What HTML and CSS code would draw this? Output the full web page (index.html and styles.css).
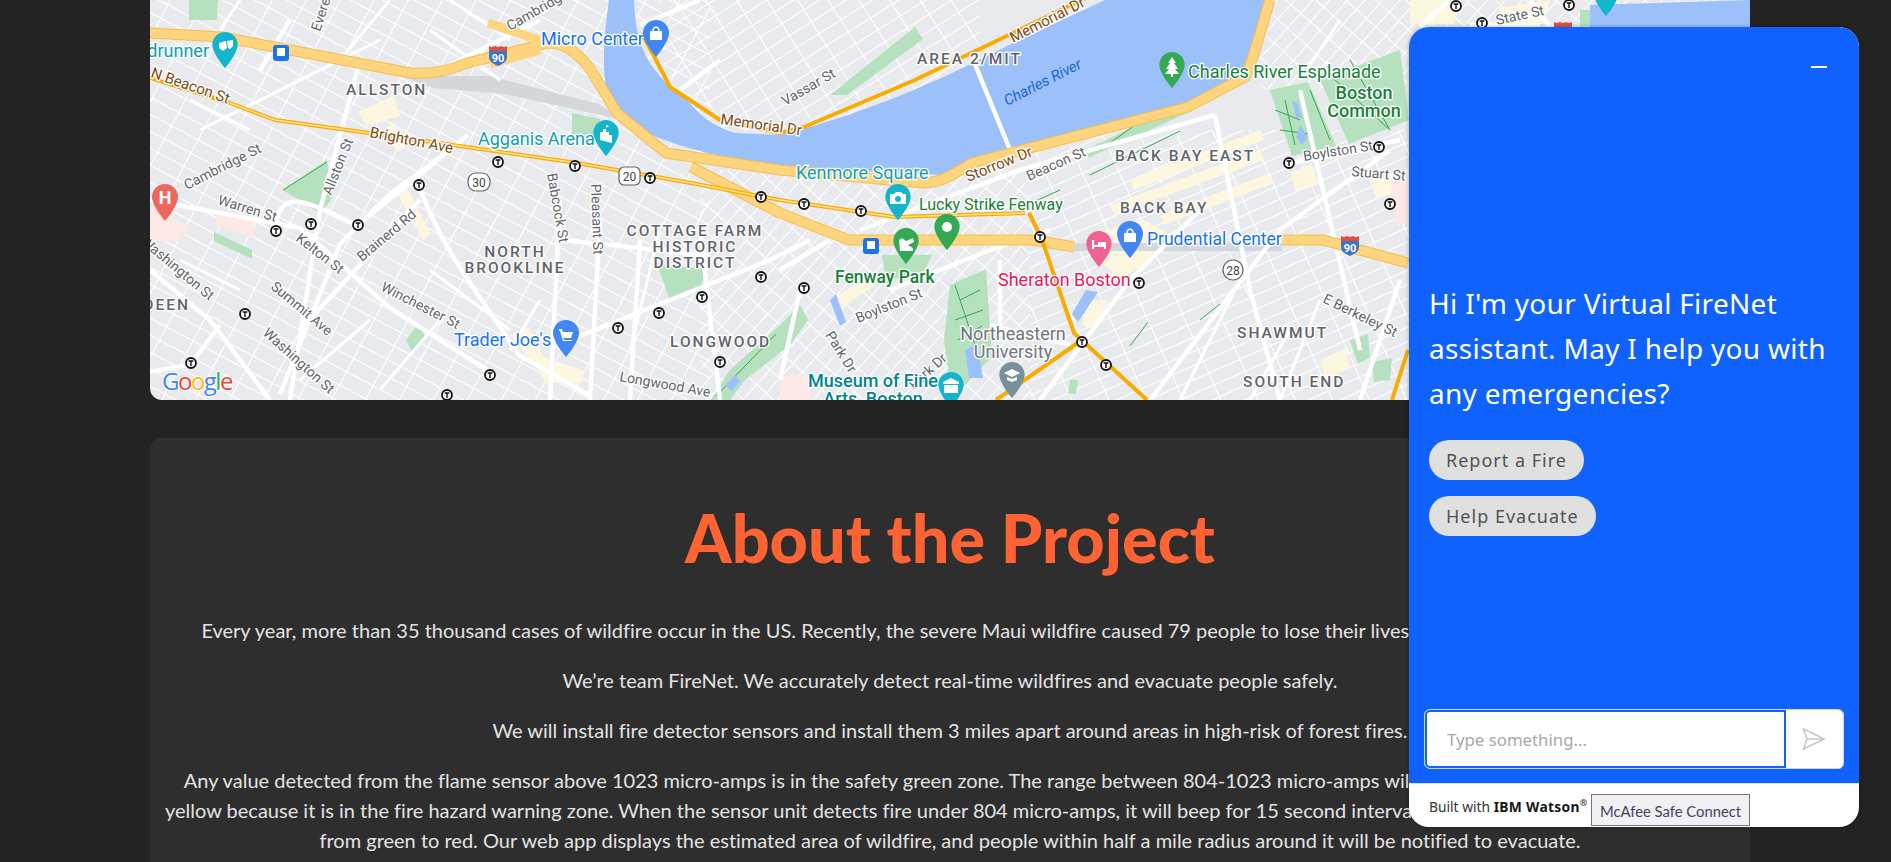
FILE: index.html
```html
<!DOCTYPE html>
<html lang="en">
<head>
    <meta charset="UTF-8">
    <meta name="viewport" content="width=device-width, initial-scale=1.0">
    <title>FireNet</title>
    <link rel="stylesheet" href="styles.css">
</head>
<body>
    <div class="page">
        <div class="map-box">
            <svg class="map" viewBox="150 0 1600 400" xmlns="http://www.w3.org/2000/svg">
                <defs>
                    <pattern id="gridWest" width="30" height="15" patternUnits="userSpaceOnUse" patternTransform="rotate(28)">
                        <path d="M0 0H30M0 0V15" class="grid-line"/>
                    </pattern>
                    <pattern id="gridNorth" width="26" height="14" patternUnits="userSpaceOnUse" patternTransform="rotate(-32)">
                        <path d="M0 0H26M0 0V14" class="grid-line"/>
                    </pattern>
                    <pattern id="gridEast" width="34" height="13" patternUnits="userSpaceOnUse" patternTransform="rotate(-24)">
                        <path d="M0 0H34M0 0V13" class="grid-line"/>
                    </pattern>
                    <pattern id="gridSouth" width="20" height="13" patternUnits="userSpaceOnUse" patternTransform="rotate(-48)">
                        <path d="M0 0H20M0 0V13" class="grid-line"/>
                    </pattern>
                    <symbol id="pin" viewBox="0 0 26 37">
                        <path d="M13 0C5.8 0 0 5.8 0 13c0 9 13 24 13 24s13-15 13-24C26 5.8 20.2 0 13 0z"/>
                    </symbol>
                    <symbol id="tstop" viewBox="0 0 12 12">
                        <circle cx="6" cy="6" r="5" fill="#fff" stroke="#111" stroke-width="1.8"/>
                        <path d="M3.6 4H8.4M6 4V9" stroke="#111" stroke-width="1.4" fill="none"/>
                    </symbol>
                    <symbol id="shield90" viewBox="0 0 20 22">
                        <path d="M1 2l3 1 3-1 3 1 3-1 3 1 3-1v5H1z" fill="#dd5144"/>
                        <path d="M1 7h18v6c0 5-5 7-9 9-4-2-9-4-9-9z" fill="#3e75c4"/>
                    </symbol>
                </defs>

                <!-- land and street texture -->
                <rect x="150" y="0" width="1600" height="400" class="land"/>
                <rect x="150" y="0" width="560" height="400" fill="url(#gridWest)"/>
                <rect x="660" y="0" width="320" height="130" fill="url(#gridNorth)"/>
                <rect x="1030" y="130" width="390" height="270" fill="url(#gridEast)"/>
                <rect x="700" y="170" width="330" height="230" fill="url(#gridSouth)"/>
                <rect x="1260" y="0" width="490" height="90" fill="url(#gridSouth)"/>

                <!-- commercial and hospital patches -->
                <path class="shop" d="M358 112l36-16 6 20-34 10zM385 128l10-6 10 26-8 4zM395 190l10-6 26 50-8 6z"/>
                <path class="shop" d="M510 335l18-8 16 30 40 14-2 12h-36l-14-22z"/>
                <path class="shop" d="M1100 232l44-12 22 12-16 30-30 16-16-14zM1130 180l130-50 4 10-130 50zM1110 205l150-55 4 10-150 55zM1160 215l110-42 4 10-110 42zM1290 172l22-8 6 20-22 8zM1370 180l26-8 4 18-24 8z"/>
                <path class="shop" d="M830 300l36-22 8 8-36 24zM1090 300h18l-14 30-12-6zM1320 360l26-12 4 20-24 12z"/>
                <path class="shop" d="M1410 0h50l-6 24h-44zM1500 8l50-8-6 24h-40z"/>
                <path class="hospital" d="M150 207l40 20-10 14-30 1zM217 210l37 6v22l-37-12z"/>
                <path class="hospital" d="M1390 180l19-8v50l-12 4zM780 375l30 0v25h-30z"/>

                <!-- rail yard -->
                <path class="rail" d="M400 76l90 0 108 28 26 16-120-26-70-6zM1074 243h208v8l-208 0z"/>

                <!-- parks -->
                <path class="park" d="M189 0h29l-1 20h-28zM283 190l44-30 6 36-12 18zM214 232l38 18v9l-38-18zM658 266l49 2-8 24-30 6zM572 113l28 6v16h-28z"/>
                <path class="park" d="M711 400l19-30 50-45 20-20 8 15-18 25-45 35-15 20zM406 340l12-16 8 14-14 14z"/>
                <path class="park" d="M630 55l20 30 50 40 8 12-24-4-44-28-14-26zM830 95l85-68 8 12-76 56zM1270 90l38-8 28 64-44 10zM1320 80l80-30 9 70-60 24zM950 285l36-16 6 88-40 42-8-60zM882 255l50 0-8 16-38 10zM1085 150l105-50 8 8-110 50zM1350 340l18-6 2 24-12 6zM1372 362l20-4-2 22-16 2z"/>
                <path class="park" d="M1580 10l36 0 2 14-38 3zM1409 50l12 18-12 18zM1190 60l36-10 10 20-40 16zM1070 380l8 0-2 14-8 0z"/>
                <path class="park-line" d="M283 190l44-28M645 85l40 36M1100 150l45-32 50-14M1285 100l10 45M1310 90l20 50M1335 80l55 50M1350 60l40 70M955 285l20 60M1200 320l20-16M1130 346l18-24M960 300l20-10M955 320l28-10M958 340l24-14M1275 110l25 10M1280 130l30 4M1090 175l90-44M1060 190l-40 18M716 396l60-62"/>

                <!-- water -->
                <path class="water" d="M609 0h25c2 40 8 67 53 100 13 15 23 25 48 33l45 2c100-25 180-65 233-92l92-43h165c-8 40-20 70-25 77-25 13-45 23-57 30L972 163c-10 6-19 14-29 12l-163-8-73-14c-47-13-92-28-98-53-9-30-4-70 0-100z"/>
                <path class="water" d="M1590 5l160-5v27h-160z"/>
                <path class="water" d="M725 385l10-10 5 6-8 10zM830 300l6-6 10 28-6 4zM965 350l12-6 6 34-14 0zM1086 290l12 2-20 30-6-8zM1292 100l6 4 4 14-6 0zM1300 125l8 12-6 8-6-8z"/>

                <!-- main white streets -->
                <path class="road-w" d="M972 57l41 100M150 200l150 28 90 80 100 64M150 270l60 50 60 80M276 231c0-60 60-10 82-6l110-90M419 185c20 60 60 110 100 170l70 40M360 60l-40 150-30 190M540 20l-100 50M290 20l-30 50M560 200l-10 200M600 220l-10 180M640 240l-10 160"/>
                <path class="road-w" d="M570 340l200-80 40-20M130 375l60-10 30-40M780 270l50-30M450 150l-60 44-50 50-60 150M420 200l-120 130M560 240l60 6 90 10M700 230l20 170"/>
                <path class="road-w" d="M860 230l160-60 195-55M890 290l100-40 60-20M1040 400l90-120 70-70M1150 400l130-170 110-80M1290 163l90-16M1215 115l35 175 30 110M1300 90l60 260M1360 400l40-120M1400 140l-100 20M800 290l-20 90M1000 260l0 70M990 325l80 20"/>
                <path class="road-w" d="M1450 0l-30 27M1470 25h70M1530 0l20 27M700 0l-60 25M720 60l-40 30"/>
                <path class="road-s" d="M200 130l180-90M240 0l-20 30M390 0l-50 60M430 30l70 50M450 0l60 40M190 100l60 30M240 290l-60-30M300 380l70-60M380 390l60-70M430 270l80 60M540 300l-30 50M660 230l-30 120M1180 400l60-120M1250 400l40-70M1320 300l-40 100M1340 20l-40 60"/>

                <!-- highways -->
                <path class="hwy-edge" d="M150 33l72 4 183 35c25 4 45-2 62-9l81-20c20 0 30 12 41 24l28 46 49 40 114 17 143 13c20 0 35-12 49-20l216-56 57-30c8-15 15-45 25-77"/>
                <path class="hwy-edge" d="M691 167l89 46 69 27h184l41 7M1282 240h41l85 23"/>
                <path class="hwy" d="M150 33l72 4 183 35c25 4 45-2 62-9l81-20c20 0 30 12 41 24l28 46 49 40 114 17 143 13c20 0 35-12 49-20l216-56 57-30c8-15 15-45 25-77"/>
                <path class="hwy" d="M691 167l89 46 69 27h184l41 7"/>
                <path class="hwy" d="M1282 240h41l85 23"/>
                <path class="hwy" d="M548 43l-60 -20M540 50l-50 14"/>
                <path class="hwy-thin" d="M230 103l45 17 94 13 208 30 114 20 89 17 114 17 131-4M642 33l28 54 50 33 60 13 24-6 111-47 98-47 77-37M1029 213l12 24 33 96 73 67M1082 340l-86 60M1392 400l16-50M150 78l80 25"/>
                <path class="hwy-core" d="M230 103l45 17 94 13 208 30 114 20 89 17 114 17 131-4"/>

                <!-- highway and route shields -->
                <use href="#shield90" x="488" y="44" width="20" height="22"/>
                <use href="#shield90" x="1340" y="234" width="20" height="22"/>
                <use href="#shield90" x="1553" y="20" width="20" height="22"/>
                <text class="shield-num" x="498" y="62">90</text>
                <text class="shield-num" x="1350" y="252">90</text>
                <rect class="route" x="468" y="173" width="22" height="18" rx="8"/>
                <text class="route-num" x="479" y="187">30</text>
                <rect class="route" x="619" y="167" width="21" height="18" rx="5"/>
                <text class="route-num" x="629.5" y="181">20</text>
                <circle class="route" cx="1233" cy="270" r="10"/>
                <text class="route-num" x="1233" y="274.5">28</text>

                <!-- street labels -->
                <g class="street">
                    <text transform="translate(320 32) rotate(-72)">Everett St</text>
                    <text transform="translate(510 31) rotate(-30)">Cambridge St</text>
                    <text transform="translate(187 190) rotate(-27)">Cambridge St</text>
                    <text transform="translate(331 196) rotate(-68)">Allston St</text>
                    <text transform="translate(217 204) rotate(17)">Warren St</text>
                    <text transform="translate(295 240) rotate(38)">Kelton St</text>
                    <text transform="translate(362 262) rotate(-40)">Brainerd Rd</text>
                    <text transform="translate(547 174) rotate(80)">Babcock St</text>
                    <text transform="translate(591 184) rotate(88)">Pleasant St</text>
                    <text transform="translate(380 290) rotate(27)">Winchester St</text>
                    <text transform="translate(270 288) rotate(40)">Summit Ave</text>
                    <text transform="translate(262 334) rotate(42)">Washington St</text>
                    <text transform="translate(140 243) rotate(40)">Washington St</text>
                    <text transform="translate(619 381) rotate(10)">Longwood Ave</text>
                    <text transform="translate(785 106) rotate(-30)">Vassar St</text>
                    <text transform="translate(1029 181) rotate(-24)">Beacon St</text>
                    <text transform="translate(858 323) rotate(-22)">Boylston St</text>
                    <text transform="translate(1304 161) rotate(-9)">Boylston St</text>
                    <text transform="translate(1351 176) rotate(5)">Stuart St</text>
                    <text transform="translate(825 335) rotate(58)">Park Dr</text>
                    <text transform="translate(914 390) rotate(-42)">Park Dr</text>
                    <text transform="translate(1322 302) rotate(26)">E Berkeley St</text>
                    <text transform="translate(1497 25) rotate(-12)">State St</text>
                </g>
                <g class="road-name">
                    <text transform="translate(150 77) rotate(19)">N Beacon St</text>
                    <text transform="translate(369 137) rotate(11)">Brighton Ave</text>
                    <text transform="translate(720 124) rotate(8)">Memorial Dr</text>
                    <text transform="translate(1013 43) rotate(-27)">Memorial Dr</text>
                    <text transform="translate(968 182) rotate(-22)">Storrow Dr</text>
                </g>
                <text class="water-name" transform="translate(1007 106) rotate(-27)">Charles River</text>

                <!-- neighbourhoods -->
                <g class="area">
                    <text x="346" y="95">ALLSTON</text>
                    <text x="190" y="310" class="area-end">DEEN</text>
                    <text x="695" y="236" class="area-mid">COTTAGE FARM</text>
                    <text x="695" y="252" class="area-mid">HISTORIC</text>
                    <text x="695" y="268" class="area-mid">DISTRICT</text>
                    <text x="515" y="257" class="area-mid">NORTH</text>
                    <text x="515" y="273" class="area-mid">BROOKLINE</text>
                    <text x="670" y="347">LONGWOOD</text>
                    <text x="917" y="64">AREA 2/MIT</text>
                    <text x="1115" y="161">BACK BAY EAST</text>
                    <text x="1120" y="213">BACK BAY</text>
                    <text x="1237" y="338">SHAWMUT</text>
                    <text x="1243" y="387">SOUTH END</text>
                </g>

                <!-- places -->
                <g class="poi poi-teal">
                    <text x="209" y="57" text-anchor="end">Roadrunner</text>
                    <text x="478" y="145">Agganis Arena</text>
                    <text x="796" y="179">Kenmore Square</text>
                </g>
                <g class="poi poi-deep">
                    <text x="873" y="387" text-anchor="middle">Museum of Fine</text>
                    <text x="873" y="405" text-anchor="middle">Arts, Boston</text>
                </g>
                <g class="poi poi-blue">
                    <text x="541" y="45">Micro Center</text>
                    <text x="454" y="346">Trader Joe's</text>
                    <text x="1147" y="245" class="poi-tight">Prudential Center</text>
                </g>
                <g class="poi poi-green">
                    <text x="1188" y="78">Charles River Esplanade</text>
                    <text x="1364" y="99" text-anchor="middle" class="poi-bold">Boston</text>
                    <text x="1364" y="117" text-anchor="middle" class="poi-bold">Common</text>
                    <text x="919" y="210" class="poi-small">Lucky Strike Fenway</text>
                    <text x="835" y="283" class="poi-bold poi-tight">Fenway Park</text>
                </g>
                <g class="poi poi-pink"><text x="998" y="286">Sheraton Boston</text></g>
                <g class="poi poi-grey">
                    <text x="1013" y="340" text-anchor="middle">Northeastern</text>
                    <text x="1013" y="358" text-anchor="middle">University</text>
                </g>

                <!-- pins -->
                <use href="#pin" x="212" y="32" width="26" height="36" class="pin-teal"/>
                <path class="pin-mark" d="M219 43l7-2 1 7-4 3-4-3zM227 41l6-1 0 6-3 3-2-1z"/>
                <use href="#pin" x="643" y="20" width="26" height="37" class="pin-blue"/>
                <path class="pin-mark" d="M650 31h12v9h-12z"/><path class="pin-hole" d="M653 31c0-5 6-5 6 0"/>
                <use href="#pin" x="593" y="120" width="26" height="36" class="pin-teal"/>
                <path class="pin-mark" d="M600 140v-8h3v-3h3v-4l3 1-3 2v4h3v3h3v8z"/>
                <use href="#pin" x="152" y="184" width="26" height="37" class="pin-red"/>
                <text class="pin-h" x="165" y="204">H</text>
                <use href="#pin" x="553" y="320" width="26" height="37" class="pin-blue"/>
                <path class="pin-mark" d="M559 329h3l1 3h10l-2 6h-8l1 2h8v1h-9l-3-10h-1z"/>
                <use href="#pin" x="1159" y="52" width="26" height="36" class="pin-green"/>
                <path class="pin-mark" d="M1172 57l4 6h-2l4 6h-3l4 5h-6v3h-2v-3h-6l4-5h-3l4-6h-2z"/>
                <use href="#pin" x="885" y="184" width="26" height="36" class="pin-teal"/>
                <path class="pin-mark" d="M890 194h4l2-2h5l2 2h3v10h-16z"/>
                <circle class="pin-dot" cx="898" cy="199" r="3"/>
                <use href="#pin" x="934" y="214" width="26" height="36" class="pin-green"/>
                <circle class="pin-mark" cx="947" cy="227" r="5"/>
                <use href="#pin" x="893" y="228" width="26" height="36" class="pin-green"/>
                <path class="pin-mark" d="M899 240l3-2 4 3 7-3 1 4-6 3 5 3v3h-13z"/>
                <use href="#pin" x="1117" y="221" width="26" height="37" class="pin-blue"/>
                <path class="pin-mark" d="M1124 233h12v9h-12z"/><path class="pin-hole" d="M1127 233c0-5 6-5 6 0"/>
                <use href="#pin" x="1086" y="231" width="26" height="36" class="pin-pink"/>
                <path class="pin-mark" d="M1092 240h2v5h4v-3h8v7h-2v-2h-10v2h-2z"/>
                <use href="#pin" x="999" y="362" width="26" height="36" class="pin-slate"/>
                <path class="pin-mark" d="M1012 369l8 4-8 4-8-4zM1007 377l5 2 5-2v3l-5 2-5-2z"/>
                <use href="#pin" x="938" y="372" width="26" height="36" class="pin-teal"/>
                <path class="pin-mark" d="M951 378l8 4v2h-16v-2zM944 385h14v8h-14z"/>
                <use href="#pin" x="1593" y="-20" width="26" height="36" class="pin-teal"/>

                <!-- subway squares -->
                <rect class="subway" x="273" y="45" width="16" height="16" rx="3"/>
                <rect class="subway" x="863" y="238" width="16" height="16" rx="3"/>
                <path class="pin-mark" d="M277 48h8v8h-8zM867 241h8v8h-8z"/>

                <!-- T stops -->
                <g>
                    <use href="#tstop" x="492" y="156" width="12" height="12"/>
                    <use href="#tstop" x="569" y="160" width="12" height="12"/>
                    <use href="#tstop" x="644" y="172" width="12" height="12"/>
                    <use href="#tstop" x="755" y="191" width="12" height="12"/>
                    <use href="#tstop" x="413" y="179" width="12" height="12"/>
                    <use href="#tstop" x="305" y="218" width="12" height="12"/>
                    <use href="#tstop" x="352" y="219" width="12" height="12"/>
                    <use href="#tstop" x="270" y="225" width="12" height="12"/>
                    <use href="#tstop" x="239" y="308" width="12" height="12"/>
                    <use href="#tstop" x="185" y="357" width="12" height="12"/>
                    <use href="#tstop" x="484" y="369" width="12" height="12"/>
                    <use href="#tstop" x="441" y="389" width="12" height="12"/>
                    <use href="#tstop" x="612" y="322" width="12" height="12"/>
                    <use href="#tstop" x="653" y="307" width="12" height="12"/>
                    <use href="#tstop" x="696" y="291" width="12" height="12"/>
                    <use href="#tstop" x="755" y="271" width="12" height="12"/>
                    <use href="#tstop" x="714" y="356" width="12" height="12"/>
                    <use href="#tstop" x="798" y="198" width="12" height="12"/>
                    <use href="#tstop" x="855" y="205" width="12" height="12"/>
                    <use href="#tstop" x="798" y="282" width="12" height="12"/>
                    <use href="#tstop" x="1034" y="231" width="12" height="12"/>
                    <use href="#tstop" x="1133" y="277" width="12" height="12"/>
                    <use href="#tstop" x="1076" y="336" width="12" height="12"/>
                    <use href="#tstop" x="1100" y="359" width="12" height="12"/>
                    <use href="#tstop" x="1283" y="157" width="12" height="12"/>
                    <use href="#tstop" x="1373" y="141" width="12" height="12"/>
                    <use href="#tstop" x="1384" y="198" width="12" height="12"/>
                    <use href="#tstop" x="1450" y="0" width="12" height="12"/>
                    <use href="#tstop" x="1476" y="17" width="12" height="12"/>
                    <use href="#tstop" x="1563" y="-1" width="12" height="12"/>
                </g>

                <text class="google" x="162" y="390"><tspan class="g-blue">G</tspan><tspan class="g-red">o</tspan><tspan class="g-yellow">o</tspan><tspan class="g-blue">g</tspan><tspan class="g-green">l</tspan><tspan class="g-red">e</tspan></text>
            </svg>
        </div>

        <section class="about-card">
            <h1>About the Project</h1>
            <p>Every year, more than 35 thousand cases of wildfire occur in the US. Recently, the severe Maui wildfire caused 79 people to lose their lives, and we aim to help prevent this.</p>
            <p>We’re team FireNet. We accurately detect real-time wildfires and evacuate people safely.</p>
            <p>We will install fire detector sensors and install them 3 miles apart around areas in high-risk of forest fires.</p>
            <p>Any value detected from the flame sensor above 1023 micro-amps is in the safety green zone. The range between 804-1023 micro-amps will turn the status of the alert light to<br>yellow because it is in the fire hazard warning zone. When the sensor unit detects fire under 804 micro-amps, it will beep for 15 second intervals and the status light is going to turn<br>from green to red. Our web app displays the estimated area of wildfire, and people within half a mile radius around it will be notified to evacuate.</p>
        </section>
    </div>

    <aside class="chat">
        <div class="chat-main">
            <div class="chat-head"><span class="minimize"></span></div>
            <p class="greeting">Hi I'm your Virtual FireNet assistant. May I help you with any emergencies?</p>
            <div class="options">
                <button class="option">Report a Fire</button>
                <button class="option">Help Evacuate</button>
            </div>
            <div class="input-row">
                <input class="chat-input" type="text" placeholder="Type something...">
                <svg class="send" viewBox="0 0 24 24" xmlns="http://www.w3.org/2000/svg">
                    <path d="M1.5 2l21 10-21 10 3.5-10zM5 12h17.500"/>
                </svg>
            </div>
        </div>
        <div class="chat-foot">Built with <b>IBM Watson</b><sup>®</sup></div>
        <div class="safe-tip">McAfee Safe Connect</div>
    </aside>
</body>
</html>
```

FILE: styles.css
```css
html, body {
    margin: 0;
    height: 862px;
    overflow: hidden;
}

body {
    position: relative;
    background: #232323;
    color: #e3e3e3;
    font-family: Lato, "Open Sans", sans-serif;
    font-variant-ligatures: none;
}

.page {
    width: 1600px;
    margin-left: 150px;
}

/* map */
.map-box {
    height: 400px;
    border-radius: 0 0 12px 12px;
    overflow: hidden;
    margin-bottom: 38px;
}

.map {
    display: block;
    width: 1600px;
    height: 400px;
}

.land { fill: #e8eaed; }
.grid-line { fill: none; stroke: #fff; stroke-width: 2; }
.shop { fill: #fef7e0; }
.hospital { fill: #fce8e6; }
.rail { fill: #d4d7db; }
.park { fill: #b5e1bf; }
.park-line { fill: none; stroke: #34a853; stroke-width: 1; }
.water { fill: #9cc0f9; }
.road-w { fill: none; stroke: #fff; stroke-width: 4.5; }
.road-s { fill: none; stroke: #fff; stroke-width: 3; }
.hwy { fill: none; stroke: #fdd57e; stroke-width: 9; stroke-linejoin: round; }
.hwy-edge { fill: none; stroke: #f8bd4c; stroke-width: 11; stroke-linejoin: round; }
.hwy-thin { fill: none; stroke: #f9ab00; stroke-width: 4; stroke-linejoin: round; }
.hwy-core { fill: none; stroke: #fde293; stroke-width: 1.5; }

.street text {
    font: 14px Roboto, sans-serif;
    fill: #5f6368;
    stroke: #fff;
    stroke-width: 2.500px;
    paint-order: stroke;
}

.road-name text {
    font: 15px Roboto, sans-serif;
    fill: #7b4a12;
    stroke: #fff;
    stroke-width: 2.500px;
    paint-order: stroke;
}

.water-name {
    font: italic 15px Roboto, sans-serif;
    fill: #1a66d2;
}

.area text {
    font: 500 15.500px Roboto, sans-serif;
    letter-spacing: 2px;
    fill: #5f6368;
    stroke: #fff;
    stroke-width: 2.500px;
    paint-order: stroke;
}

.area .area-mid { text-anchor: middle; }
.area .area-end { text-anchor: end; }

.poi text {
    font: 18px Roboto, sans-serif;
    stroke: #fff;
    stroke-width: 2.500px;
    paint-order: stroke;
}

.poi .poi-bold { font-weight: 500; }
.poi .poi-tight { font-size: 17.500px; }
.poi .poi-small { font-size: 16px; }
.poi-teal text { fill: #129eaf; }
.poi-deep text { fill: #00838f; font-weight: 500; }
.poi-blue text { fill: #1a73e8; }
.poi-green text { fill: #188038; }
.poi-pink text { fill: #e8175d; }
.poi-grey text { fill: #70757a; }

.pin-teal { fill: #12b5cb; }
.pin-blue { fill: #4285f4; }
.pin-red { fill: #ee675c; }
.pin-green { fill: #34a853; }
.pin-pink { fill: #f06292; }
.pin-slate { fill: #78909c; }
.pin-mark { fill: #fff; }
.pin-hole { fill: none; stroke: #fff; stroke-width: 1.500; }
.pin-dot { fill: #12b5cb; }
.pin-h { font: 700 18px Roboto, sans-serif; fill: #fff; text-anchor: middle; }

.subway { fill: #1a73e8; }
.route { fill: #fff; stroke: #5f6368; stroke-width: 1.200; }
.route-num { font: 12px Roboto, sans-serif; fill: #444; text-anchor: middle; }
.shield-num { font: 700 11px Roboto, sans-serif; fill: #fff; text-anchor: middle; }

.google { font: 500 24px "Open Sans", sans-serif; letter-spacing: -1.500px; stroke: #fff; stroke-width: 2px; paint-order: stroke; }
.g-blue { fill: #4285f4; }
.g-red { fill: #ea4335; }
.g-yellow { fill: #fbbc05; }
.g-green { fill: #34a853; }

/* about */
.about-card {
    height: 500px;
    background: #2e2e2e;
    border-radius: 12px;
    padding-top: 54px;
    box-sizing: border-box;
    text-align: center;
}

.about-card h1 {
    margin: 0 0 33px;
    font-size: 66.500px;
    line-height: 90px;
    font-weight: 900;
    color: #ff6333;
}

.about-card p {
    margin: 0 0 20px;
    font-size: 20px;
    line-height: 30px;
    white-space: nowrap;
}

/* chat widget */
.chat {
    position: absolute;
    top: 27px;
    right: 32px;
    width: 450px;
    height: 800px;
    display: flex;
    flex-direction: column;
    border-radius: 20px;
    overflow: hidden;
    background: #fff;
    box-shadow: 0 0 4px rgba(0, 0, 0, 0.3);
    font-family: "Noto Sans", Roboto, sans-serif;
}

.chat-main {
    flex: 1;
    display: flex;
    flex-direction: column;
    background: #0f62fe;
    padding: 0 15px 14px;
}

.chat-head {
    height: 254px;
    display: flex;
    justify-content: flex-end;
    padding: 39px 17px 0 0;
    box-sizing: border-box;
}

.minimize {
    width: 16px;
    height: 2px;
    background: #fff;
}

.greeting {
    margin: 0 0 24px;
    padding: 0 5px;
    font-size: 28px;
    line-height: 45px;
    letter-spacing: 0.3px;
    color: #fff;
}

.options {
    flex: 1;
    display: flex;
    flex-direction: column;
    align-items: flex-start;
    gap: 16px;
    padding-left: 5px;
}

.option {
    height: 40px;
    padding: 0 17px;
    border: none;
    border-radius: 20px;
    background: #e0e0e0;
    color: #525252;
    font: 18px "Noto Sans", sans-serif;
    letter-spacing: 1px;
}

.input-row {
    height: 60px;
    display: flex;
    align-items: center;
    background: #fff;
    border: 1px solid #d0d4dc;
    border-radius: 6px;
    box-sizing: border-box;
}

.chat-input {
    width: 361px;
    height: 58px;
    box-sizing: border-box;
    border: 2px solid #0f62fe;
    border-radius: 5px 0 0 5px;
    padding: 0 20px;
    font: 16.800px "Noto Sans", sans-serif;
    outline: none;
}

.chat-input::placeholder { color: #a8a8a8; }

.send {
    width: 24px;
    height: 24px;
    margin-left: 16px;
    fill: none;
    stroke: #c6c6c6;
    stroke-width: 1.500;
}

.chat-foot {
    height: 44px;
    box-sizing: border-box;
    border-top: 1px solid #e0e0e0;
    padding: 14px 0 0 20px;
    font-size: 13.800px;
    line-height: 18px;
    color: #333;
}

.chat-foot b { color: #161616; letter-spacing: 0.3px; }
.chat-foot sup { font-size: 9px; line-height: 0; font-weight: 700; }

.safe-tip {
    position: absolute;
    left: 182px;
    bottom: 1px;
    width: 159px;
    height: 32px;
    box-sizing: border-box;
    border: 1px solid #767676;
    background: #f0f0f5;
    color: #445;
    font: 14.800px/32px Lato, sans-serif;
    text-align: center;
}
```
